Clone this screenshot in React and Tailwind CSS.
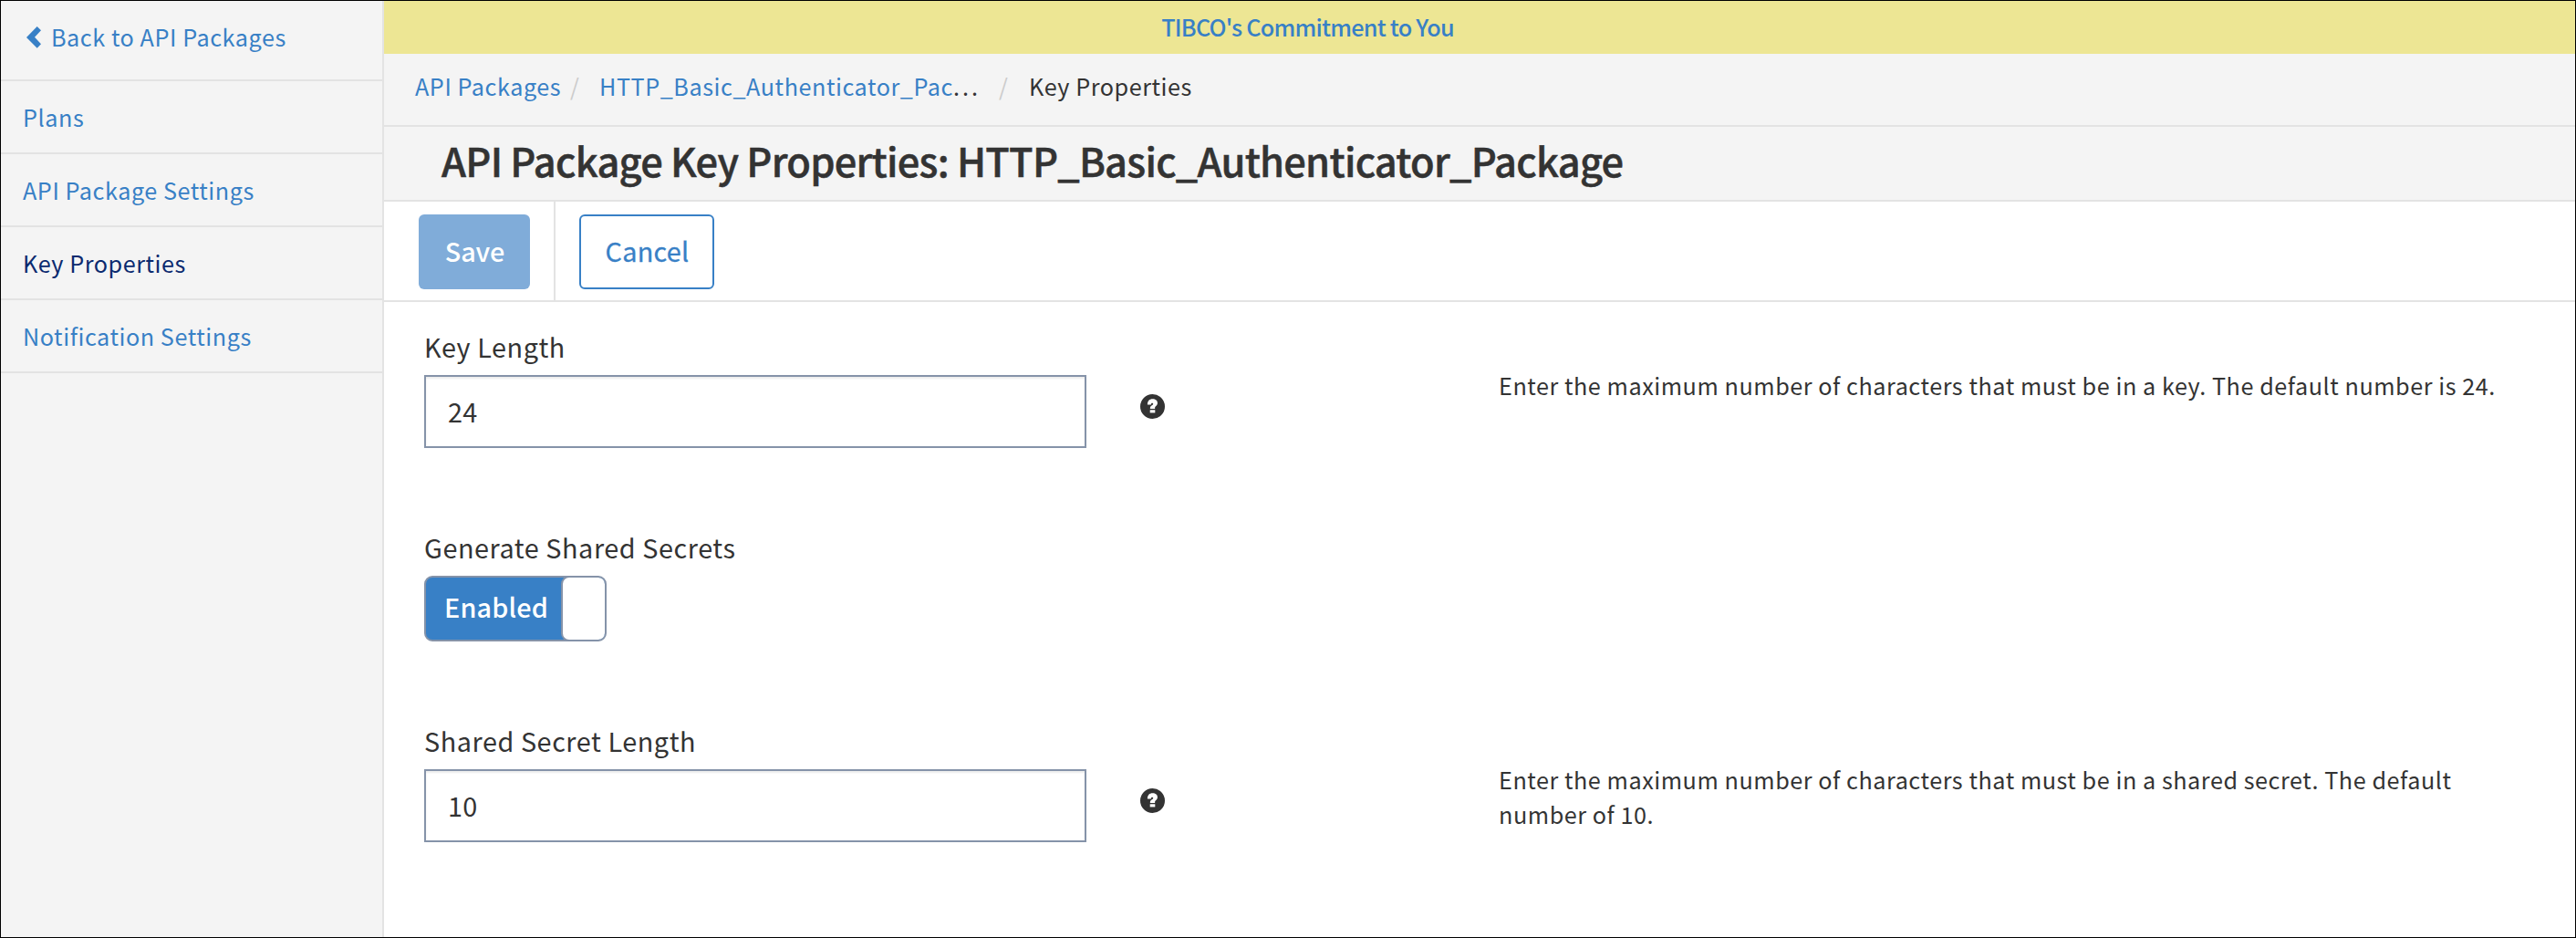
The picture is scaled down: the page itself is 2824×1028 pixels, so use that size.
const NAV = [
  { label: 'Plans' },
  { label: 'API Package Settings' },
  { label: 'Key Properties', active: true },
  { label: 'Notification Settings' },
];

function ChevronLeft() {
  return (
    <svg className="mt-[2px] h-[24px] w-[16px] shrink-0" viewBox="0 0 48 72" fill="currentColor" aria-hidden="true">
      <path d="M35 0L48 13L27 35.5L48 58L35 71L0 36Z" />
    </svg>
  );
}

function QuestionSign() {
  return (
    <svg className="mt-[72px] h-[27px] w-[27px] shrink-0" viewBox="0 0 82 82" aria-hidden="true">
      <circle cx="41" cy="41" r="41" fill="#333333" />
      <path
        d="M24 35C24 22 31 16 41 16C51 16 57.500 21 57.500 29.500C57.500 39 49 39 49 45V48.500H33V46C33 38 43 37 43 32.500C43 30 41.500 29.500 40 29.500C37 29.500 36 31.500 36 35Z"
        fill="#ffffff"
      />
      <rect x="32.500" y="52.500" width="17" height="9.500" fill="#ffffff" />
    </svg>
  );
}

function Sidebar() {
  return (
    <aside className="flex w-[420px] shrink-0 flex-col border-r-2 border-[#e3e3e3] bg-[#f4f4f4] text-[25.2px] tracking-[0.56px] text-[#3880c6]">
      <a className="flex h-[88px] items-center gap-[11px] border-b-2 border-[#e3e3e3] pb-[8px] pl-[28px]">
        <ChevronLeft />
        <span className="leading-[36px]">Back to API Packages</span>
      </a>
      {NAV.map((item) => (
        <a
          key={item.label}
          className={
            item.active
              ? 'flex h-[80px] items-center border-b-2 border-[#e3e3e3] pl-[24px] text-[#0b2a6f]'
              : 'flex h-[80px] items-center border-b-2 border-[#e3e3e3] pl-[24px]'
          }
        >
          <span className="leading-[36px]">{item.label}</span>
        </a>
      ))}
    </aside>
  );
}

function Breadcrumbs() {
  return (
    <nav className="flex h-[80px] items-center border-b-2 border-[#e3e3e3] bg-[#f4f4f4] pb-[8px] pl-[34px] text-[25.2px] leading-[36px] tracking-[0.56px] whitespace-nowrap text-[#3880c6]">
      <a className="w-[170px]">API Packages</a>
      <span className="w-[32px] text-[#cccccc]">/</span>
      <a className="w-[438px]">
        HTTP_Basic_Authenticator_Pac
        <span className="tracking-[3px] text-[#333333]">...</span>
      </a>
      <span className="w-[33px] text-[#cccccc]">/</span>
      <span className="text-[#333333]">Key Properties</span>
    </nav>
  );
}

function Label({ children }) {
  return (
    <div className="mb-[11px] h-[40px] text-[28.8px] leading-[40px] tracking-[0.56px] whitespace-nowrap">
      {children}
    </div>
  );
}

function TextField({ label, value, help }) {
  return (
    <section className="grid grid-cols-[785px_393px_1110px] items-start">
      <div>
        <Label>{label}</Label>
        <div className="flex h-[80px] w-[726px] items-center border-2 border-[#8593a9] pb-[1px] pl-[24px] text-[28.8px] leading-[40px] tracking-[0.3px] shadow-[inset_0_2px_2px_rgba(0,0,0,0.075)]">
          {value}
        </div>
      </div>
      <QuestionSign />
      <p className="mt-[43px] text-[25.2px] leading-[38px] tracking-[0.55px]">{help}</p>
    </section>
  );
}

function Toggle() {
  return (
    <div className="flex h-[72px] w-[200px] overflow-hidden rounded-[9px] border-2 border-[#8593a9] bg-[#3880c6]">
      <div className="flex h-full w-[148px] items-center pb-[5px] pl-[20px] text-[28.8px] leading-[40px] font-medium tracking-[0.15px] text-white">
        Enabled
      </div>
      <div className="-my-[2px] -mr-[2px] flex-1 rounded-[9px] border-2 border-[#8593a9] bg-white" />
    </div>
  );
}

export default function App() {
  return (
    <div className="flex h-[1028px] w-[2824px] overflow-hidden border border-black bg-white font-['Noto_Sans_CJK_SC',sans-serif] text-[#333333]">
      <Sidebar />
      <main className="flex min-w-0 flex-1 flex-col">
        <div className="flex h-[58px] shrink-0 items-center justify-center bg-[#ede694] pr-[377px] pb-[3px]">
          <a className="text-[25.2px] leading-[36px] font-medium tracking-[-0.75px] whitespace-nowrap text-[#3880c6]">
            TIBCO's Commitment to You
          </a>
        </div>
        <Breadcrumbs />
        <header className="flex h-[82px] shrink-0 items-center border-b-2 border-[#e3e3e3] bg-[#f4f4f4] pb-[9px] pl-[63px]">
          <h1 className="text-[43.4px] leading-[60px] font-medium tracking-[-0.74px] whitespace-nowrap [-webkit-text-stroke:0.5px_#333333]">
            API Package Key Properties: HTTP_Basic_Authenticator_Package
          </h1>
        </header>
        <div className="flex h-[110px] shrink-0 border-b-2 border-[#e3e3e3] pl-[38px] text-[28.8px] leading-[40px]">
          <div className="w-[150px] border-r-2 border-[#e3e3e3] pt-[14px]">
            <button className="flex h-[82px] w-[122px] items-center justify-center rounded-[6px] bg-[#80acd9] pb-[2px] pl-[1px] font-medium tracking-[-0.1px] text-white">
              Save
            </button>
          </div>
          <div className="pt-[14px] pl-[26px]">
            <button className="flex h-[82px] w-[148px] items-center justify-center rounded-[6px] border-2 border-[#3880c6] pb-[2px] pl-[1px] tracking-[0.25px] text-[#3880c6] [-webkit-text-stroke:0.3px_#3880c6]">
              Cancel
            </button>
          </div>
        </div>
        <div className="flex flex-col gap-[89px] pt-[29px] pl-[44px]">
          <TextField
            label="Key Length"
            value="24"
            help="Enter the maximum number of characters that must be in a key. The default number is 24."
          />
          <section>
            <Label>Generate Shared Secrets</Label>
            <Toggle />
          </section>
          <TextField
            label="Shared Secret Length"
            value="10"
            help="Enter the maximum number of characters that must be in a shared secret. The default number of 10."
          />
        </div>
      </main>
    </div>
  );
}
